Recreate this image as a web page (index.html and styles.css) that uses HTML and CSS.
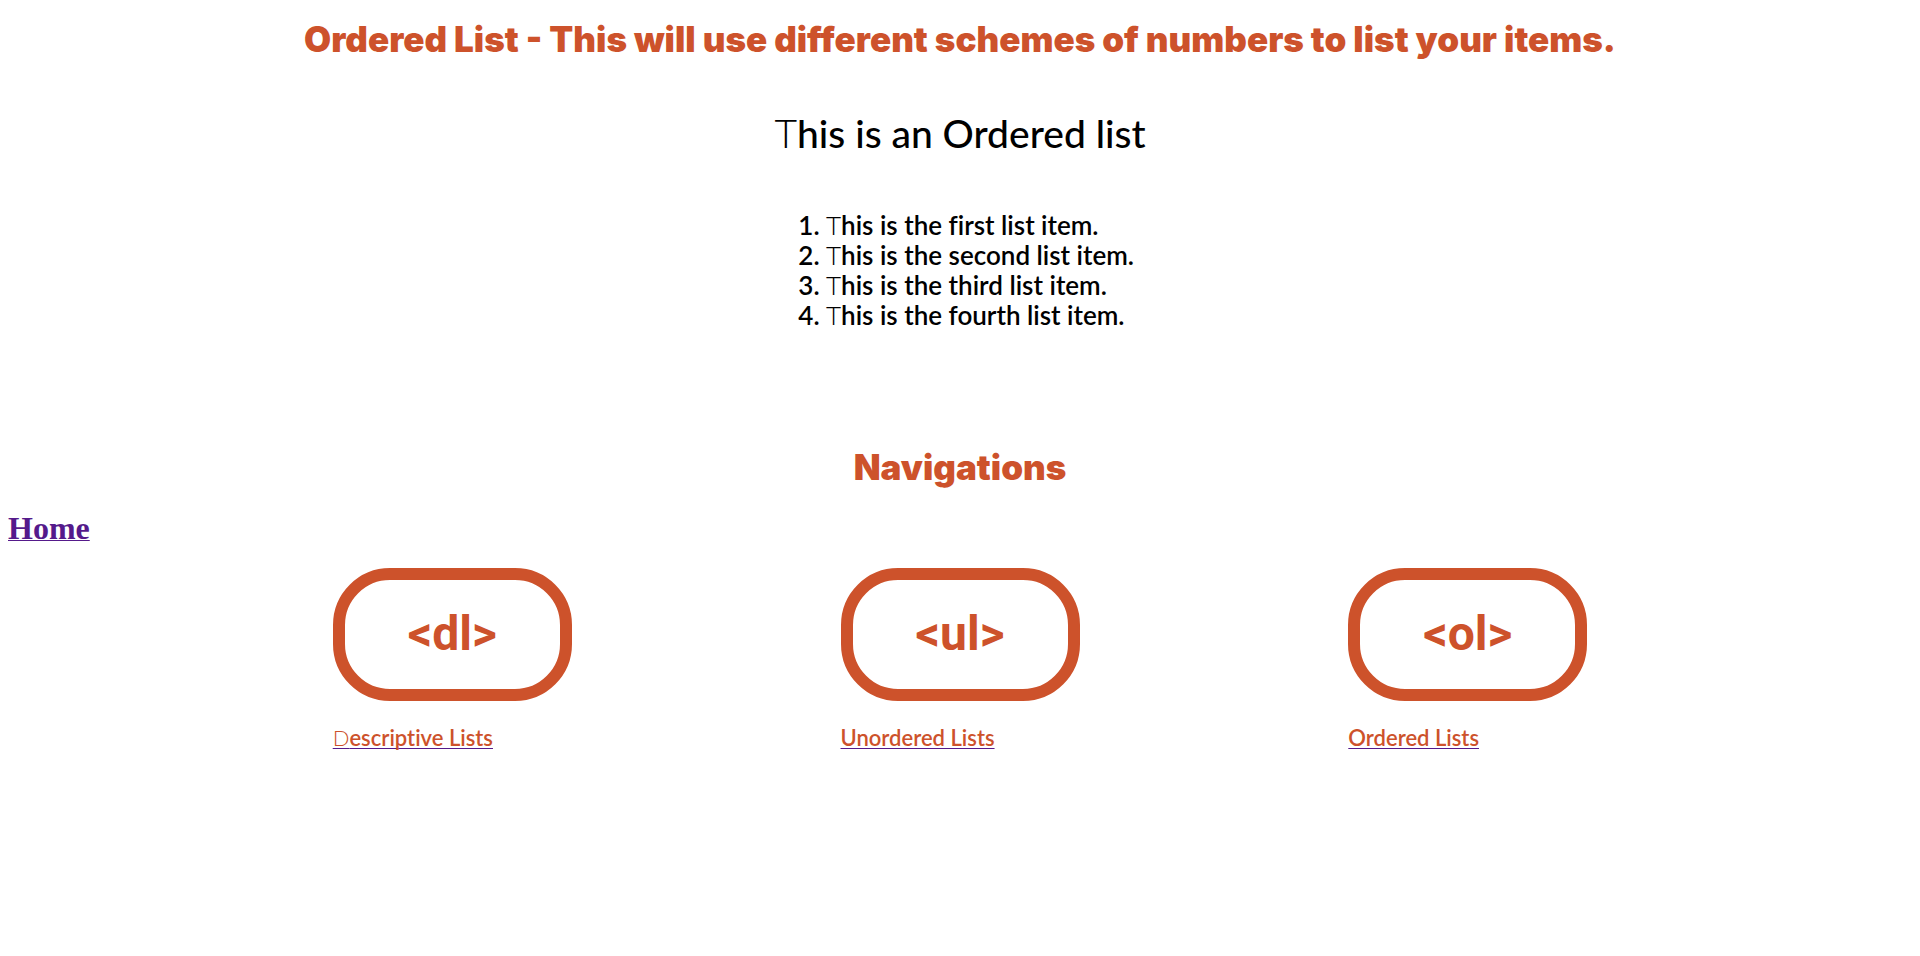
FILE: index.html
```html
<!DOCTYPE html>
<html lang="en">
<head>
<meta charset="utf-8">
<title>Ordered List</title>
<link rel="stylesheet" href="styles.css">
</head>
<body>
<main>
  <h1 class="title">Ordered List - This will use different schemes of numbers to list your items.</h1>
  <section class="example">
    <p class="intro">This is an Ordered list</p>
    <ol class="items">
      <li>This is the first list item.</li>
      <li>This is the second list item.</li>
      <li>This is the third list item.</li>
      <li>This is the fourth list item.</li>
    </ol>
  </section>
</main>
<nav>
  <h2 class="title">Navigations</h2>
  <a class="home" href="#home">Home</a>
  <div class="cards">
    <a class="card" href="#dl"><span class="badge">&lt;dl&gt;</span><span class="label label-light">Descriptive Lists</span></a>
    <a class="card" href="#ul"><span class="badge">&lt;ul&gt;</span><span class="label">Unordered Lists</span></a>
    <a class="card" href="#ol"><span class="badge">&lt;ol&gt;</span><span class="label">Ordered Lists</span></a>
  </div>
</nav>
</body>
</html>
```
FILE: styles.css
```css
body {
  margin: 16px 8px;
  background: #fff;
  color: #000;
}

.title {
  margin: 0;
  color: #cd522b;
  font: 900 35px/46px Inter, "Liberation Sans", sans-serif;
  text-align: center;
}

.example {
  display: flex;
  flex-direction: column;
  align-items: center;
  padding: 49px 0 114px;
  font-family: Lato, "Open Sans", sans-serif;
  font-weight: 500;
  font-variant-ligatures: none;
}

.intro {
  margin: 0 0 55px;
  font-size: 39px;
  line-height: 44px;
}

.intro::first-letter,
.items li::first-letter,
.label-light::first-letter {
  font-weight: 300;
}

.items {
  margin: 0;
  padding-left: 40px;
  font-size: 26px;
  font-weight: 600;
  line-height: 30px;
}

.home {
  display: inline-block;
  margin: 20px 0 22px;
  color: #551a8b;
  font: 700 32px/36px "Liberation Serif", serif;
  text-decoration-thickness: 1px;
}

.cards {
  display: flex;
  justify-content: center;
  gap: 14vw;
}

.card {
  display: flex;
  flex-direction: column;
  align-items: flex-start;
  gap: 24px;
  color: #cd522b;
  text-decoration: none;
}

.badge {
  box-sizing: border-box;
  width: 239px;
  padding: 26px 0 27px;
  border: 12px solid #cd522b;
  border-radius: 57px;
  font: 700 48px/56px Roboto, "Liberation Sans", sans-serif;
  text-align: center;
}

.label {
  font: 600 22px/25px Lato, "Open Sans", sans-serif;
  font-variant-ligatures: none;
  text-decoration: underline 1px #551a8b;
  text-underline-offset: 2px;
  text-decoration-skip-ink: none;
}
```
